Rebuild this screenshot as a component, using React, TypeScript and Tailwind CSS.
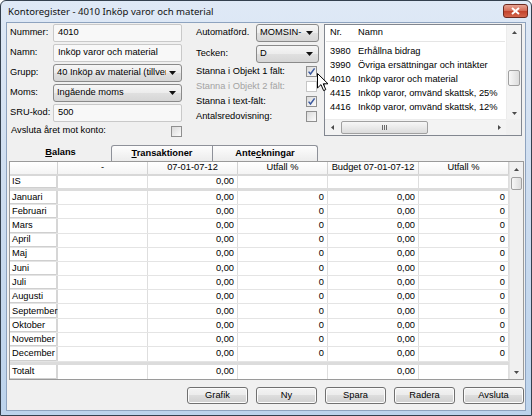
import React from 'react';

type Dir = 'up' | 'down' | 'left' | 'right';

function SArrow({ dir }: { dir: Dir }) {
  const v = dir === 'up' || dir === 'down';
  const w = v ? 5 : 3;
  const h = v ? 3 : 5;
  const d =
    dir === 'up' ? 'M0 3L2.5 0L5 3z' : dir === 'down' ? 'M0 0h5L2.5 3z' : dir === 'left' ? 'M3 0v5L0 2.5z' : 'M0 0v5L3 2.5z';
  return (
    <svg width={w} height={h} viewBox={`0 0 ${w} ${h}`}>
      <path d={d} fill="#4a4a4a" />
    </svg>
  );
}

function Checkbox({ checked, disabled }: { checked?: boolean; disabled?: boolean }) {
  return (
    <div
      className={
        disabled
          ? 'w-[11px] h-[11px] border border-[#c6c6c6] bg-white'
          : 'w-[11px] h-[11px] border border-[#8f8f8f] bg-gradient-to-br from-[#dadada] to-[#fbfbfb] flex items-center justify-center'
      }
    >
      {checked && (
        <svg width="9" height="9" viewBox="0 0 9 9">
          <path d="M1.6 4.6L3.5 7L7.6 1.4" stroke="#3c5aa0" strokeWidth="1.5" fill="none" />
        </svg>
      )}
    </div>
  );
}

function Combo({ text }: { text: string }) {
  return (
    <div className="h-[18px] w-full border border-[#8a8a8a] rounded-[3px] bg-[linear-gradient(#f6f6f6,#ececec_50%,#e0e0e0_50%,#d6d6d6)] flex items-center pl-[3px] pr-[5px]">
      <span className="flex-1 overflow-hidden whitespace-nowrap">{text}</span>
      <svg width="7" height="4" viewBox="0 0 7 4" className="ml-[3px] shrink-0">
        <path d="M0 0h7L3.5 4z" fill="#111" />
      </svg>
    </div>
  );
}

function TextBox({ text }: { text: string }) {
  return (
    <div className="h-[18px] w-full border border-[#c9c9c9] rounded-[2px] bg-[#f8f8f8] flex items-center pl-[4px]">
      {text}
    </div>
  );
}

function FieldRow({ label, children }: { label: string; children: React.ReactNode }) {
  return (
    <div className="flex items-center h-[18px]">
      <div className="w-[43px] shrink-0">{label}</div>
      <div className="w-[129px]">{children}</div>
    </div>
  );
}

function Btn({ label }: { label: string }) {
  return (
    <div className="w-[61px] h-[17px] border border-[#707070] rounded-[3px] bg-[linear-gradient(#f3f3f3,#ebebeb_50%,#dddddd_50%,#cfcfcf)] flex items-center justify-center shadow-[inset_0_0_0_1px_#fcfcfc]">
      {label}
    </div>
  );
}

const listRows = [
  ['3980', 'Erhållna bidrag'],
  ['3990', 'Övriga ersättningar och intäkter'],
  ['4010', 'Inköp varor och material'],
  ['4415', 'Inköp varor, omvänd skattsk, 25%'],
  ['4416', 'Inköp varor, omvänd skattsk, 12%'],
];

const months = [
  ['Januari', 'h-[14px]'],
  ['Februari', 'h-[14px]'],
  ['Mars', 'h-[15px]'],
  ['April', 'h-[14px]'],
  ['Maj', 'h-[14px]'],
  ['Juni', 'h-[15px]'],
  ['Juli', 'h-[14px]'],
  ['Augusti', 'h-[14px]'],
  ['September', 'h-[15px]'],
  ['Oktober', 'h-[14px]'],
  ['November', 'h-[14px]'],
  ['December', 'h-[15px]'],
];

function DataRow({
  label,
  h,
  vals,
  sep,
}: {
  label: string;
  h: string;
  vals: string[];
  sep?: 'bottom' | 'top';
}) {
  const rowCls =
    sep === 'bottom'
      ? 'flex border-b-[3px] border-[#dcdcdc]'
      : sep === 'top'
      ? 'flex border-t-[3px] border-[#dcdcdc]'
      : 'flex border-b border-[#e4e4e4]';
  const ws = ['w-[90px]', 'w-[90px]', 'w-[90px]', 'w-[91px]', 'w-[90px]'];
  return (
    <div className={`${rowCls} ${h}`}>
      <div className="w-[48px] shrink-0 bg-white border-r-[2px] border-[#d6d6d6] pl-[2px] flex items-center shadow-[inset_0_-1px_0_#cfcfcf]">
        {label}
      </div>
      {vals.map((v, i) => (
        <div
          key={i}
          className={`${ws[i]} shrink-0 bg-white border-r border-[#dedede] flex items-center justify-end pr-[3px]`}
        >
          {v}
        </div>
      ))}
    </div>
  );
}

export default function App() {
  return (
    <div className="w-[532px] h-[416px] relative overflow-hidden border border-[#34404e] rounded-t-[6px] bg-gradient-to-b from-[#dfe9f6] via-[#ccdcef] to-[#bcd3ec] flex flex-col font-['Liberation_Sans',Arial,sans-serif] text-[9.3px] leading-none text-black">
      {/* Title bar */}
      <div className="h-[21px] shrink-0 flex items-center pl-[7px] relative">
        <span className="font-['Noto_Sans',Arial,sans-serif] text-[9.6px] text-[#111]">
          Kontoregister - 4010 Inköp varor och material
        </span>
        <div className="absolute right-[3px] top-[3px] w-[25px] h-[14px] rounded-[3px] border border-[#6e2a20] bg-[linear-gradient(#e6a393,#d46a55_50%,#c2412a_50%,#d4654c)] flex items-center justify-center">
          <svg width="9" height="8" viewBox="0 0 9 8">
            <path d="M1 1L8 7M8 1L1 7" stroke="#fff" strokeWidth="2" />
          </svg>
        </div>
      </div>

      {/* Client area */}
      <div className="flex-1 mx-[5px] mb-[4px] border border-[#8ea3bf] bg-[#f0f0f0] flex flex-col">
        {/* Top section */}
        <div className="h-[122px] shrink-0 flex pl-[3px] pt-[1px]">
          {/* Left column */}
          <div className="w-[172px] flex flex-col gap-[2px]">
            <FieldRow label="Nummer:">
              <TextBox text="4010" />
            </FieldRow>
            <FieldRow label="Namn:">
              <TextBox text="Inköp varor och material" />
            </FieldRow>
            <FieldRow label="Grupp:">
              <Combo text="40 Inköp av material (tillverl" />
            </FieldRow>
            <FieldRow label="Moms:">
              <Combo text="Ingående moms" />
            </FieldRow>
            <FieldRow label="SRU-kod:">
              <TextBox text="500" />
            </FieldRow>
            <div className="h-[14px] flex items-center justify-between">
              <span className="pl-[1px]">Avsluta året mot konto:</span>
              <Checkbox />
            </div>
          </div>

          {/* Middle column */}
          <div className="w-[123px] ml-[14px] flex flex-col">
            <div className="flex items-center h-[18px]">
              <div className="w-[60px] shrink-0">Automatförd.</div>
              <div className="w-[63px]">
                <Combo text="MOMSIN-" />
              </div>
            </div>
            <div className="flex items-center h-[18px] mt-[3px]">
              <div className="w-[60px] shrink-0">Tecken:</div>
              <div className="w-[63px]">
                <Combo text="D" />
              </div>
            </div>
            <div className="mt-[1px] flex flex-col pr-[2px]">
              <div className="h-[15px] flex items-center justify-between">
                <span>Stanna i Objekt 1 fält:</span>
                <Checkbox checked />
              </div>
              <div className="h-[15px] flex items-center justify-between">
                <span className="text-[#a3a3a3]">Stanna i Objekt 2 fält:</span>
                <Checkbox disabled />
              </div>
              <div className="h-[15px] flex items-center justify-between">
                <span>Stanna i text-fält:</span>
                <Checkbox checked />
              </div>
              <div className="h-[15px] flex items-center justify-between">
                <span>Antalsredovisning:</span>
                <Checkbox />
              </div>
            </div>
          </div>

          {/* List box */}
          <div className="ml-[5px] w-[198px] h-[112px] border border-[#828790] bg-white flex flex-col">
            <div className="flex flex-1 min-h-0">
              <div className="flex-1 flex flex-col">
                <div className="h-[17px] flex items-center border-b border-[#e5e5e5] mx-[1px]">
                  <span className="w-[32px] pl-[4px]">Nr.</span>
                  <span>Namn</span>
                </div>
                <div className="pt-[3px] flex flex-col">
                  {listRows.map(([n, t]) => (
                    <div key={n} className="h-[14px] flex items-center whitespace-nowrap overflow-hidden">
                      <span className="w-[33px] pl-[5px] shrink-0">{n}</span>
                      <span>{t}</span>
                    </div>
                  ))}
                </div>
              </div>
              <div className="w-[15px] shrink-0 bg-[#f3f3f3] border-l border-[#ececec] flex flex-col items-center">
                <div className="h-[15px] flex items-center justify-center">
                  <SArrow dir="up" />
                </div>
                <div className="flex-1 w-full relative">
                  <div className="absolute left-[1px] right-[1px] top-[30px] h-[16px] rounded-[2px] border border-[#a0a0a0] bg-gradient-to-r from-[#f7f7f7] to-[#dcdcdc]" />
                </div>
                <div className="h-[12px] flex items-center justify-center">
                  <SArrow dir="down" />
                </div>
              </div>
            </div>
            <div className="h-[16px] shrink-0 flex">
              <div className="flex-1 bg-[#f3f3f3] border-t border-[#ececec] flex items-center">
                <div className="w-[14px] flex items-center justify-center">
                  <SArrow dir="left" />
                </div>
                <div className="w-[87px] h-[13px] ml-[2px] rounded-[2px] border border-[#a0a0a0] bg-gradient-to-b from-[#f7f7f7] to-[#dcdcdc] flex items-center justify-center gap-[1px]">
                  <div className="w-[1px] h-[5px] bg-[#6a6a6a]" />
                  <div className="w-[1px] h-[5px] bg-[#6a6a6a]" />
                  <div className="w-[1px] h-[5px] bg-[#6a6a6a]" />
                </div>
                <div className="flex-1" />
                <div className="w-[14px] flex items-center justify-center">
                  <SArrow dir="right" />
                </div>
              </div>
              <div className="w-[15px] bg-[#f0f0f0]" />
            </div>
          </div>
        </div>

        {/* Tabs */}
        <div className="h-[16px] shrink-0 flex pl-[3px] items-end">
          <div className="w-[101px] h-[16px] flex items-center justify-center font-bold">
            <span>
              <span className="underline">B</span>alans
            </span>
          </div>
          <div className="w-[102px] h-[16px] border border-b-0 border-[#8e9199] rounded-tl-[3px] bg-gradient-to-b from-[#fdfdfd] to-[#ececec] flex items-center justify-center font-bold">
            <span>
              <span className="underline">T</span>ransaktioner
            </span>
          </div>
          <div className="w-[105px] h-[16px] border border-b-0 border-l-0 border-[#8e9199] rounded-tr-[3px] bg-gradient-to-b from-[#fdfdfd] to-[#ececec] flex items-center justify-center font-bold">
            <span>
              Ante<span className="underline">c</span>kningar
            </span>
          </div>
        </div>

        {/* Table */}
        <div className="ml-[2px] w-[515px] h-[219px] shrink-0 border border-[#9a9a9a] bg-white flex">
          <div className="w-[499px] flex flex-col">
            <div className="h-[14px] flex border-b-[2px] border-[#d8d8d8] bg-gradient-to-b from-white to-[#f4f4f4]">
              <div className="w-[48px] border-r border-[#d2d2d2]" />
              <div className="w-[90px] border-r border-[#d2d2d2] flex items-center justify-center">-</div>
              <div className="w-[90px] border-r border-[#d2d2d2] flex items-center justify-center">07-01-07-12</div>
              <div className="w-[90px] border-r border-[#d2d2d2] flex items-center justify-center">Utfall %</div>
              <div className="w-[91px] border-r border-[#d2d2d2] flex items-center justify-center">Budget 07-01-07-12</div>
              <div className="w-[90px] border-r border-[#d2d2d2] flex items-center justify-center">Utfall %</div>
            </div>
            <DataRow label="IS" h="h-[15px]" vals={['', '0,00', '', '', '']} sep="bottom" />
            {months.map(([m, h]) => (
              <DataRow key={m} label={m} h={h} vals={['', '0,00', '0', '0,00', '0']} />
            ))}
            <DataRow label="Totalt" h="h-[17px]" vals={['', '0,00', '', '0,00', '']} sep="top" />
          </div>
          <div className="w-[14px] bg-[#f0f0f0] border-l border-[#e2e2e2] flex flex-col items-center">
            <div className="h-[14px] flex items-center justify-center">
              <SArrow dir="up" />
            </div>
            <div className="flex-1 w-full relative">
              <div className="absolute left-[1px] right-[1px] top-[1px] h-[13px] rounded-[2px] border border-[#a0a0a0] bg-gradient-to-r from-[#f7f7f7] to-[#dcdcdc]" />
            </div>
            <div className="h-[14px] flex items-center justify-center">
              <SArrow dir="down" />
            </div>
          </div>
        </div>

        {/* Buttons */}
        <div className="mt-[7px] h-[17px] shrink-0 flex justify-end gap-[8px] pr-[1px]">
          <Btn label="Grafik" />
          <Btn label="Ny" />
          <Btn label="Spara" />
          <Btn label="Radera" />
          <Btn label="Avsluta" />
        </div>
      </div>

      {/* Mouse cursor */}
      <svg className="absolute left-[316px] top-[72px]" width="12" height="19" viewBox="0 0 12 19">
        <path d="M0.5 0.5V15L4 11.6L6.6 17.6L8.8 16.6L6.2 10.8H11Z" fill="#fff" stroke="#000" strokeWidth="1" />
      </svg>
    </div>
  );
}
